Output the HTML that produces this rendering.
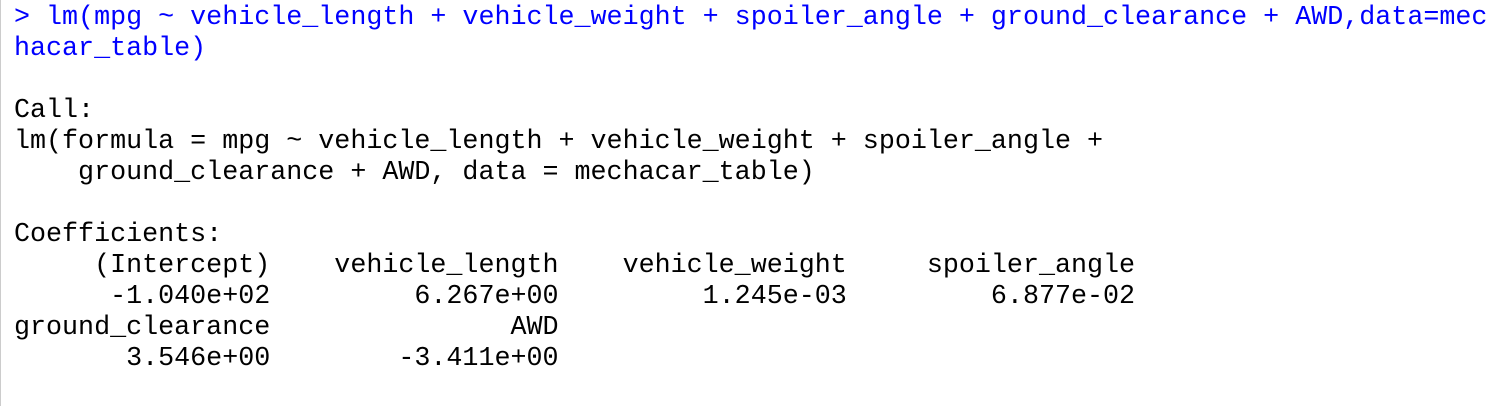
<!DOCTYPE html>
<html><head><meta charset="utf-8"><style>
html,body{margin:0;padding:0;background:#fff;}
body{width:1494px;height:406px;overflow:hidden;position:relative;border-left:1px solid #ccc;box-sizing:border-box;}
pre{margin:0;position:absolute;left:13px;top:3px;font-family:"Liberation Mono",monospace;font-size:26.7px;line-height:31px;color:#000;}
.c{color:#0000ff;}
</style></head><body>
<pre><span class="c">&gt; lm(mpg ~ vehicle_length + vehicle_weight + spoiler_angle + ground_clearance + AWD,data=mec
hacar_table)</span>

Call:
lm(formula = mpg ~ vehicle_length + vehicle_weight + spoiler_angle + 
    ground_clearance + AWD, data = mechacar_table)

Coefficients:
     (Intercept)    vehicle_length    vehicle_weight     spoiler_angle  
      -1.040e+02         6.267e+00         1.245e-03         6.877e-02  
ground_clearance               AWD  
       3.546e+00        -3.411e+00  
</pre>
</body></html>
